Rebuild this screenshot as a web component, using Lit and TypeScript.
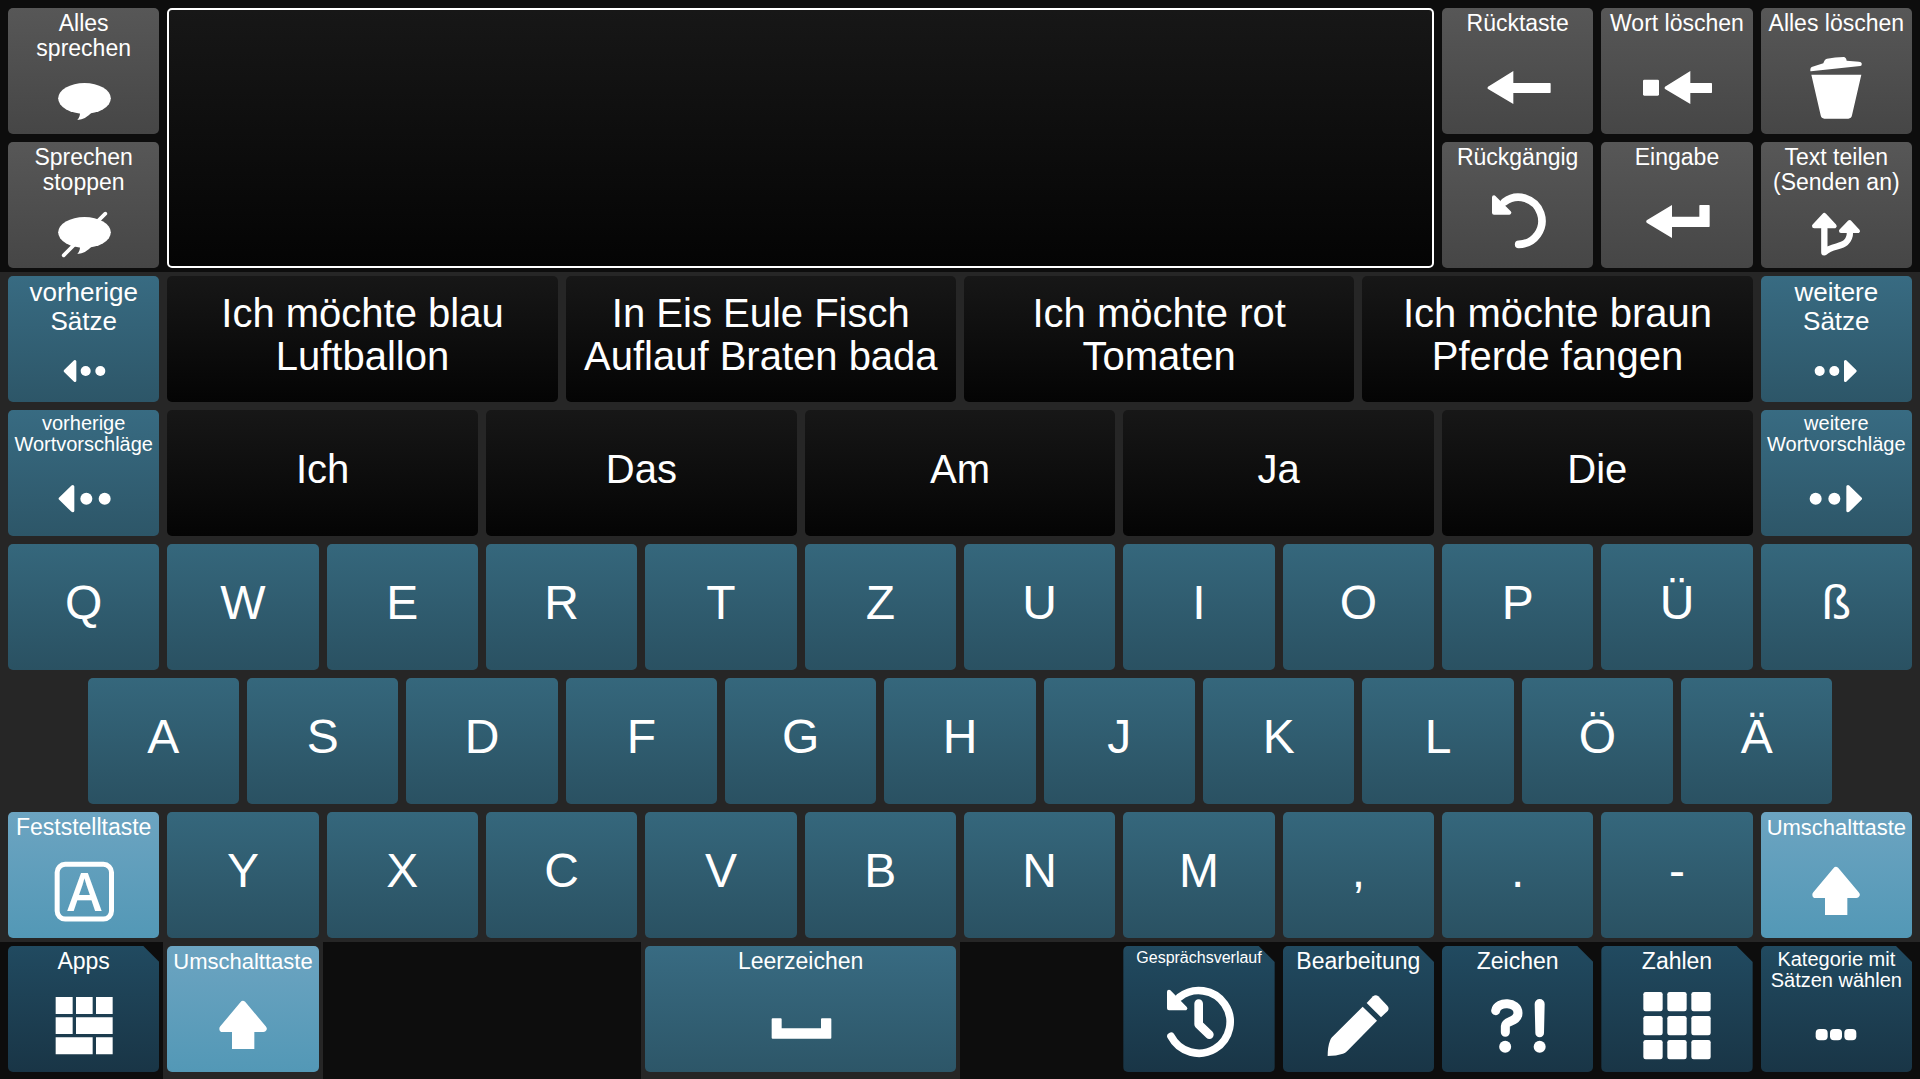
import { LitElement, html, css, svg, nothing } from "lit";
import { customElement, property } from "lit/decorators.js";
import { classMap } from "lit/directives/class-map.js";

type Tone = "grey" | "teal" | "letter" | "light" | "navy" | "black";
type LabelSize = "xl" | "lg" | "md" | "sm" | "xs";

interface KeyDef {
  label: string[];
  tone: Tone;
  icon?: string;
  size?: LabelSize;
}

interface Icon {
  short?: boolean;
  origin: string;
  art: unknown;
}

const bubbleTail = "c0 9 -2 14 -8 22 q26 -2 44 -24z";

const shiftArt = svg`
  <path class="join" stroke-width="20" d="M729 613 L790 686 H668z"/>
  <path d="M696 690 h67 v57 h-67z"/>`;

// Artwork is drawn on a 3x canvas: 288 units wide, 270 (tall) or 189 (short) high.
const ICONS: Record<string, Icon> = {
  speak: {
    short: true,
    origin: "106 213",
    art: svg`<ellipse cx="251.500" cy="295" rx="79" ry="46"/><path d="M238 338 ${bubbleTail}"/>`,
  },
  mute: {
    short: true,
    origin: "106 615",
    art: svg`<path class="line" stroke-width="11" d="M314 641 L189 766"/>
      <ellipse cx="251.500" cy="697" rx="79" ry="46"/><path d="M238 740 ${bubbleTail}"/>`,
  },
  back: {
    origin: "148 132",
    art: svg`<path d="M202 260 L278 213 V249 H388 q2 0 2 2 V277 q0 2 -2 2 H278 V312 L202 267 q-3 -3 0 -7z"/>`,
  },
  wordDelete: {
    origin: "627 132",
    art: svg`<rect x="669" y="239" width="48" height="48" rx="4"/>
      <path d="M735 260 L811 213 V249 H874 q2 0 2 2 V277 q0 2 -2 2 H811 V312 L735 267 q-3 -3 0 -7z"/>`,
  },
  trash: {
    origin: "1105 132",
    art: svg`<path d="M1172 209 q0 -6 4 -8 L1211 190 q3 -12 11 -14 q24 -5 50 -5 q7 0 9 11 L1318 185 q7 1 8 5 v5 q0 2 -4 3 L1174 214 q-2 0 -2 -2z"/>
      <path d="M1175 224 H1325 L1297 346 q-2 10 -11 10 H1214 q-9 0 -11 -10z"/>`,
  },
  undo: {
    origin: "148 534",
    art: svg`<path class="line" stroke-width="23" d="M294 733 A70.500 70.500 0 1 0 251 606"/>
      <path class="join" stroke-width="12" d="M220 592 L266 638 H220z"/>`,
  },
  enter: {
    origin: "627 534",
    art: svg`<path d="M680 661 L756 615 V650 H838 V617 q0 -2 2 -2 H867 q2 0 2 2 V679 q0 2 -2 2 H756 V714 L680 668 q-3 -3 0 -7z"/>`,
  },
  share: {
    short: true,
    origin: "1105 615",
    art: svg`<path class="join" stroke-width="14" d="M1214 646 L1244 678 H1184z"/>
      <path class="join" stroke-width="12" d="M1290 666 L1315 693 H1264z"/>
      <path class="line" stroke-width="19" d="M1214 686 V757 C1236 737 1262 742 1278 728 C1289 718 1291 708 1291 696"/>`,
  },
  prevSmall: {
    short: true,
    origin: "106 222",
    art: svg`<path class="join" stroke-width="8" d="M193 318 L223 289 V347z"/>
      <circle cx="255" cy="318" r="15"/><circle cx="299" cy="318" r="15"/>`,
  },
  prevLarge: {
    short: true,
    origin: "106 624",
    art: svg`<path class="join" stroke-width="10" d="M179 701 L216 665 V737z"/>
      <circle cx="257" cy="701" r="18"/><circle cx="312" cy="701" r="18"/>`,
  },
  nextSmall: {
    short: true,
    origin: "445 222",
    art: svg`<path class="join" stroke-width="8" d="M647 318 L617 289 V347z"/>
      <circle cx="540" cy="318" r="15"/><circle cx="584" cy="318" r="15"/>`,
  },
  nextLarge: {
    short: true,
    origin: "445 624",
    art: svg`<path class="join" stroke-width="10" d="M662 701 L625 665 V737z"/>
      <circle cx="528" cy="701" r="18"/><circle cx="584" cy="701" r="18"/>`,
  },
  caps: {
    origin: "106 144",
    art: svg`<rect class="line" stroke-width="15" x="169.500" y="193" width="163" height="164" rx="24"/>
      <text class="glyph" x="251" y="332" text-anchor="middle">A</text>`,
  },
  apps: {
    origin: "106 546",
    art: svg`<path d="M165 591h51v51h-51z M226 591h50v51h-50z M286 591h50v51h-50z
      M165 652h51v50h-51z M226 652h110v50h-110z M165 712h111v51h-111z M286 712h50v51h-50z"/>`,
  },
  shift: { origin: "585 546", art: shiftArt },
  space: {
    origin: "457 546",
    art: svg`<path d="M516 655 H540 q3 0 3 3 V685 H661 V658 q0 -3 3 -3 H689 q3 0 3 3 V713 q0 3 -3 3 H516 q-3 0 -3 -3 V658 q0 -3 3 -3z"/>`,
  },
  history: {
    origin: "153 156",
    art: svg`<path class="line" stroke-width="23" d="M213 319 A94 94 0 1 0 238 202"/>
      <path class="join" stroke-width="12" d="M207 185 L256 235 H207z"/>
      <path class="line" stroke-width="26" d="M296 221 V283 L328 314"/>`,
  },
  pencil: {
    origin: "631 156",
    art: svg`<path d="M801 219 L820 199 q8 -7 16 0 L863 227 q7 8 1 16 L844 262z"/>
      <path d="M789 230 L832 272 L742 364 Q737 369 730 371 Q710 378 684 378 Q684 350 691 332 Q693 326 697 322z"/>`,
  },
  signs: {
    origin: "88 126",
    art: svg`<path class="line" stroke-width="27" d="M165 212 C170 182 232 184 232 219 C232 246 194 242 194 258 V277"/>
      <circle cx="193.500" cy="320" r="18"/>
      <path d="M282 192 a15 15 0 0 1 30 0 L310 279 a13 13 0 0 1 -26 0z"/>
      <circle cx="297" cy="320" r="18"/>`,
  },
  digits: {
    origin: "387 576",
    art: svg`${[430, 502, 574].map((x) =>
      [606, 678, 750].map((y) => svg`<rect x=${x} y=${y} width="58" height="58" rx="7"/>`),
    )}`,
  },
  more: {
    short: true,
    origin: "865 657",
    art: svg`${[948, 991, 1034].map((x) => svg`<rect x=${x} y="717" width="36" height="34" rx="12"/>`)}`,
  },
};

const key = (label: string, tone: Tone, icon?: string, size?: LabelSize): KeyDef => ({
  label: label.split("|"),
  tone,
  icon,
  size,
});
const letters = (row: string): KeyDef[] => [...row].map((c) => key(c, "letter", undefined, "xl"));

const SENTENCES = [
  "Ich möchte blau|Luftballon",
  "In Eis Eule Fisch|Auflauf Braten bada",
  "Ich möchte rot|Tomaten",
  "Ich möchte braun|Pferde fangen",
];
const WORDS = ["Ich", "Das", "Am", "Ja", "Die"];

@customElement("board-key")
class BoardKey extends LitElement {
  @property({ attribute: false }) def!: KeyDef;

  static styles = css`
    :host {
      display: flex;
      padding: 4px;
      min-width: 0;
    }
    .key {
      flex: 1;
      min-width: 0;
      display: flex;
      flex-direction: column;
      align-items: center;
      margin: 0;
      padding: 3px 0 0;
      border: 0;
      border-radius: 5px;
      color: #fff;
      font-family: Arial, "Liberation Sans", sans-serif;
      font-size: 23px;
      line-height: 25px;
      text-align: center;
      white-space: nowrap;
      overflow: hidden;
      cursor: pointer;
    }
    .row {
      display: block;
    }
    .lg {
      font-size: 26px;
      line-height: 29px;
      padding-top: 2px;
    }
    .md {
      font-size: 22px;
    }
    .sm {
      font-size: 20px;
      line-height: 21px;
    }
    .xs {
      font-size: 16px;
      line-height: 18px;
    }
    .plain {
      justify-content: center;
      padding: 0 0 8px;
      font-size: 40px;
      line-height: 43px;
    }
    .xl {
      font-size: 48px;
      line-height: 54px;
    }
    .grey {
      background: linear-gradient(#575757, #464646);
    }
    .teal {
      background: linear-gradient(#386b82, #2d5668);
    }
    .letter {
      background: linear-gradient(#35677c, #2a5162);
    }
    .light {
      background: linear-gradient(#6ca4c1, #5398b6);
    }
    .navy {
      background: linear-gradient(#214a60, #193546);
      clip-path: polygon(0 0, calc(100% - 16px) 0, 100% 16px, 100% 100%, 0 100%);
    }
    .black {
      background: linear-gradient(#171717, #040404);
    }
    .icon {
      flex: none;
      display: block;
      width: 96px;
      height: 90px;
      margin-top: auto;
      fill: #fff;
    }
    .short {
      height: 63px;
    }
    .line {
      fill: none;
      stroke: #fff;
      stroke-linecap: round;
      stroke-linejoin: round;
    }
    .join {
      stroke: #fff;
      stroke-linejoin: round;
    }
    .glyph {
      font: 600 156px "Open Sans", sans-serif;
    }
  `;

  render() {
    const { label, tone, icon, size } = this.def;
    const art = icon ? ICONS[icon] : undefined;
    const classes = { key: true, plain: !art, [tone]: true, [size ?? "base"]: true };
    return html`<button type="button" class=${classMap(classes)}>
      <span>${label.map((line) => html`<span class="row">${line}</span>`)}</span>
      ${art
        ? html`<svg
            class=${classMap({ icon: true, short: !!art.short })}
            viewBox="${art.origin} 288 ${art.short ? 189 : 270}"
            aria-hidden="true"
          >${art.art}</svg>`
        : nothing}
    </button>`;
  }
}

@customElement("app-root")
class AppRoot extends LitElement {
  static styles = css`
    :host {
      display: block;
    }
    .board {
      display: flex;
      flex-direction: column;
      min-height: 100vh;
      background: #262626;
    }
    .band {
      display: grid;
      grid-template-columns: repeat(24, minmax(0, 1fr));
      grid-auto-rows: minmax(0, 1fr);
      padding: 0 4px;
    }
    .top {
      flex: 2 0 0px;
      padding-top: 4px;
      background: #0d0d0d;
    }
    .middle {
      flex: 5 0 0px;
    }
    .bottom {
      flex: 1 0 3px;
      background: #0d0d0d;
    }
    .bottom > * {
      padding-bottom: 7px;
    }
    .w2 {
      grid-column-end: span 2;
    }
    .w4 {
      grid-column-end: span 4;
    }
    .w5 {
      grid-column-end: span 5;
    }
    .indent {
      grid-column-start: 2;
    }
    .row-start {
      grid-column-start: 1;
    }
    .raised {
      background: #262626;
    }
    .from9 {
      grid-column-start: 9;
    }
    .from15 {
      grid-column-start: 15;
    }
    .editor {
      grid-area: 1 / 3 / span 2 / span 16;
      display: flex;
      padding: 4px;
    }
    .text {
      flex: 1;
      min-width: 0;
      box-sizing: border-box;
      margin: 0;
      padding: 8px 12px;
      border: 2px solid #fff;
      border-radius: 5px;
      outline: none;
      resize: none;
      color: #fff;
      background: linear-gradient(#171717, #040404);
      font: 40px/43px Arial, "Liberation Sans", sans-serif;
    }
  `;

  private cell(def: KeyDef, cls = "w2") {
    return html`<board-key class=${cls} .def=${def}></board-key>`;
  }

  render() {
    return html`<main class="board">
      <section class="band top">
        ${this.cell(key("Alles|sprechen", "grey", "speak"))}
        <div class="editor"><textarea class="text" aria-label="Text"></textarea></div>
        ${this.cell(key("Rücktaste", "grey", "back"))}
        ${this.cell(key("Wort löschen", "grey", "wordDelete"))}
        ${this.cell(key("Alles löschen", "grey", "trash"))}
        ${this.cell(key("Sprechen|stoppen", "grey", "mute"), "w2 row-start")}
        ${this.cell(key("Rückgängig", "grey", "undo"))}
        ${this.cell(key("Eingabe", "grey", "enter"))}
        ${this.cell(key("Text teilen|(Senden an)", "grey", "share"))}
      </section>
      <section class="band middle">
        ${this.cell(key("vorherige|Sätze", "teal", "prevSmall", "lg"))}
        ${SENTENCES.map((s) => this.cell(key(s, "black"), "w5"))}
        ${this.cell(key("weitere|Sätze", "teal", "nextSmall", "lg"))}
        ${this.cell(key("vorherige|Wortvorschläge", "teal", "prevLarge", "sm"))}
        ${WORDS.map((w) => this.cell(key(w, "black"), "w4"))}
        ${this.cell(key("weitere|Wortvorschläge", "teal", "nextLarge", "sm"))}
        ${letters("QWERTZUIOPÜß").map((k) => this.cell(k))}
        ${letters("ASDFGHJKLÖÄ").map((k, i) => this.cell(k, i ? "w2" : "w2 indent"))}
        ${this.cell(key("Feststelltaste", "light", "caps"), "w2 row-start")}
        ${letters("YXCVBNM,.-").map((k) => this.cell(k))}
        ${this.cell(key("Umschalttaste", "light", "shift", "md"))}
      </section>
      <section class="band bottom">
        ${this.cell(key("Apps", "navy", "apps"))}
        ${this.cell(key("Umschalttaste", "light", "shift", "md"), "w2 raised")}
        ${this.cell(key("Leerzeichen", "teal", "space"), "w4 raised from9")}
        ${this.cell(key("Gesprächsverlauf", "navy", "history", "xs"), "w2 from15")}
        ${this.cell(key("Bearbeitung", "navy", "pencil"))}
        ${this.cell(key("Zeichen", "navy", "signs"))}
        ${this.cell(key("Zahlen", "navy", "digits"))}
        ${this.cell(key("Kategorie mit|Sätzen wählen", "navy", "more", "sm"))}
      </section>
    </main>`;
  }
}
